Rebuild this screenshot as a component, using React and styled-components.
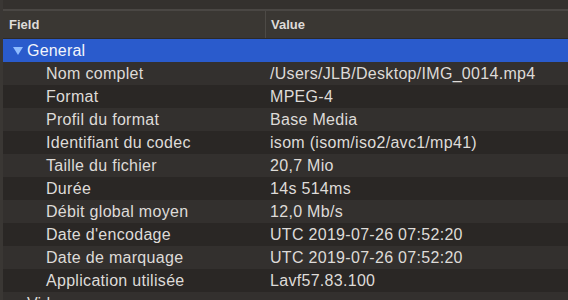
import React from "react";
import styled, { createGlobalStyle } from "styled-components";

const rows = [
  ["Nom complet", "/Users/JLB/Desktop/IMG_0014.mp4"],
  ["Format", "MPEG-4"],
  ["Profil du format", "Base Media"],
  ["Identifiant du codec", "isom (isom/iso2/avc1/mp41)"],
  ["Taille du fichier", "20,7 Mio"],
  ["Durée", "14s 514ms"],
  ["Débit global moyen", "12,0 Mb/s"],
  ["Date d'encodage", "UTC 2019-07-26 07:52:20"],
  ["Date de marquage", "UTC 2019-07-26 07:52:20"],
  ["Application utilisée", "Lavf57.83.100"],
];

const Disclosure = ({ color }) => (
  <Arrow viewBox="0 0 10 8" width="10" height="8">
    <path d="M0 0 H10 L5 8 Z" fill={color} />
  </Arrow>
);

export default function App() {
  return (
    <>
      <Global />
      <Frame>
        <TopBand />
        <Header>
          <HeadCell>Field</HeadCell>
          <HeadCell $divider>Value</HeadCell>
        </Header>
        <Section>
          <Disclosure color="#8fbcff" />
          General
        </Section>
        {rows.map(([k, v], i) => (
          <Row key={k} $alt={i % 2 === 0}>
            <Key>{k}</Key>
            <Val>{v}</Val>
          </Row>
        ))}
        <Section $collapsed>
          <Disclosure color="#b9b6b2" />
          Video
        </Section>
      </Frame>
    </>
  );
}

const Global = createGlobalStyle`
  html, body {
    margin: 0;
    background: #2a2725;
    overflow: hidden;
  }
`;

const Frame = styled.div`
  width: 568px;
  height: 300px;
  overflow: hidden;
  background: #2a2725;
  border-left: 3px solid #3a3734;
  box-sizing: border-box;
  font-family: "Liberation Sans", Arial, sans-serif;
  color: #dedbd8;
`;

const TopBand = styled.div`
  height: 9px;
  background: #34312e;
  border-bottom: 2px solid #4a4744;
`;

const Header = styled.div`
  display: grid;
  grid-template-columns: 262px 1fr;
  height: 27px;
  align-items: center;
  background: #3a3733;
  border-bottom: 1px solid #2c2a28;
  font-size: 13px;
  font-weight: bold;
`;

const HeadCell = styled.div`
  padding-left: ${(p) => (p.$divider ? "5px" : "6px")};
  height: 100%;
  display: flex;
  align-items: center;
  border-left: ${(p) => (p.$divider ? "1px solid #4d4a46" : "none")};
`;

const Section = styled.div`
  height: 23px;
  display: flex;
  align-items: center;
  padding-left: 10px;
  font-size: 16px;
  letter-spacing: 0.2px;
  background: ${(p) => (p.$collapsed ? "#33302e" : "#2a5bcc")};
  color: ${(p) => (p.$collapsed ? "#dedbd8" : "#f2f5fb")};
`;

const Arrow = styled.svg`
  display: block;
  margin-right: 4px;
  margin-top: 1px;
`;

const Row = styled.div`
  display: grid;
  grid-template-columns: 264px 1fr;
  height: 23px;
  align-items: center;
  font-size: 16px;
  letter-spacing: 0.3px;
  background: ${(p) => (p.$alt ? "#33302e" : "#2a2725")};
`;

const Key = styled.div`
  padding-left: 43px;
  white-space: nowrap;
`;

const Val = styled.div`
  padding-left: 3px;
  white-space: nowrap;
`;
